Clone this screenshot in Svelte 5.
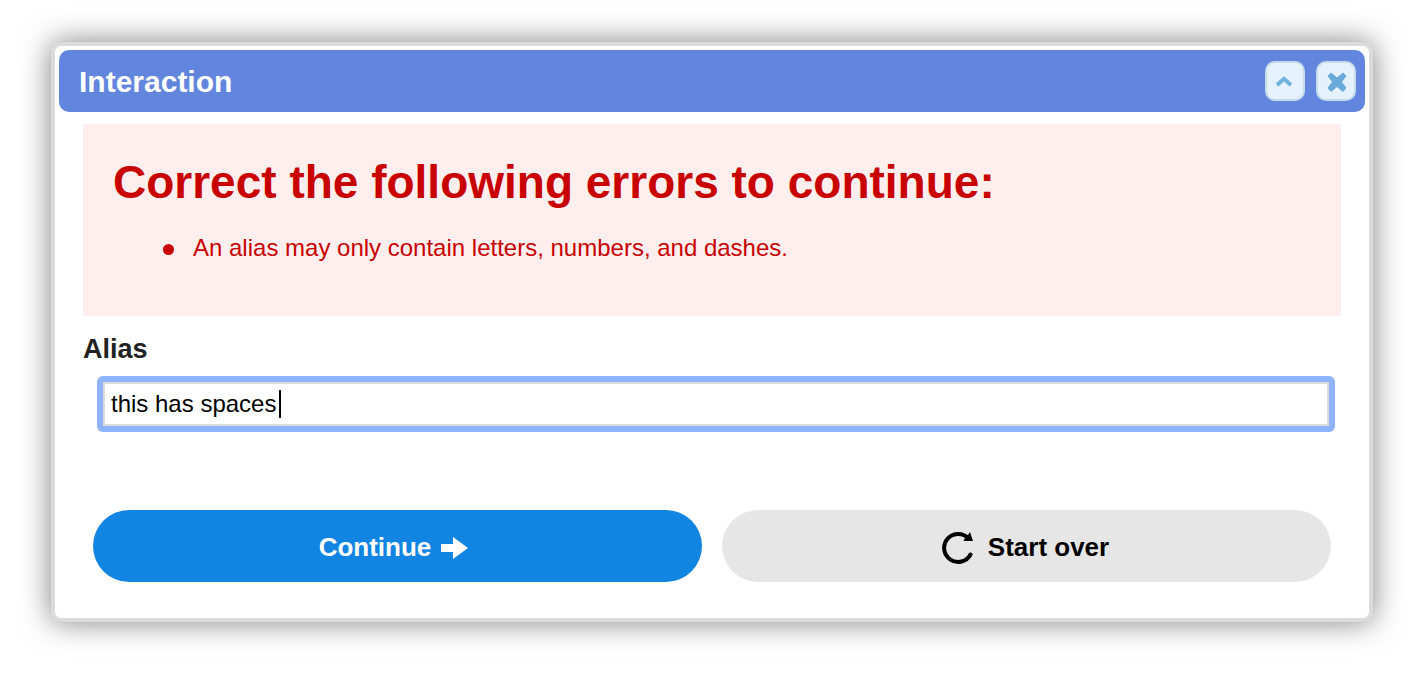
<script>
  let alias = $state('this has spaces');
  let collapsed = $state(false);
  let errors = ['An alias may only contain letters, numbers, and dashes.'];

  let input = $state();

  const context = document.createElement('canvas').getContext('2d');
  context.font = '24px "Liberation Sans", Helvetica, Arial, sans-serif';

  // the caret stands just after the typed text
  let caret = $derived(Math.ceil(context.measureText(alias).width) + 16);

  $effect(() => {
    input?.focus();
  });
</script>

<div class="dialog" role="dialog" aria-labelledby="dialog-title">
  <header class="titlebar">
    <span id="dialog-title" class="title">Interaction</span>
    <button
      type="button"
      class="tool"
      aria-label="Collapse"
      aria-expanded={!collapsed}
      onclick={() => (collapsed = !collapsed)}
    >
      <svg viewBox="0 0 36 36" width="36" height="36">
        <path d="M10 22 L17 15.8 L24 22" fill="none" stroke="#72b0dd" stroke-width="4" />
      </svg>
    </button>
    <button type="button" class="tool" aria-label="Close">
      <svg viewBox="0 0 36 36" width="36" height="36">
        <path
          d="M13 10 L19 15 L25 10 L28 13 L23.500 19 L28 25 L25 28.500 L19 23.500 L13 28.500 L10 25 L14.500 19 L10 13 Z"
          fill="#6aaadb"
          stroke="#6aaadb"
          stroke-linejoin="round"
        />
      </svg>
    </button>
  </header>

  {#if !collapsed}
    <form class="content">
      <div class="errors">
        <h1>Correct the following errors to continue:</h1>
        <ul>
          {#each errors as error}
            <li>{error}</li>
          {/each}
        </ul>
      </div>

      <label for="alias">Alias</label>
      <div class="field">
        <input id="alias" type="text" autocomplete="off" spellcheck="false" bind:value={alias} bind:this={input} />
        <span class="caret" style:left="{caret}px"></span>
      </div>

      <div class="actions">
        <button type="submit" class="primary">
          Continue
          <svg viewBox="0 0 28 24" width="28" height="24">
            <path d="M1 9 H13 V2 L28 13 L13 24 V17 H1 Z" fill="#fff" />
          </svg>
        </button>
        <button type="reset" class="secondary">
          <svg viewBox="0 0 34 34" width="34" height="34">
            <path d="M30.500 24.500 A14 14 0 1 1 28 8" fill="none" stroke="#000" stroke-width="4" stroke-linecap="round" />
            <path d="M30 2 L33 11 L23.500 11 L25 8 L28 5 Z" fill="#000" />
          </svg>
          Start over
        </button>
      </div>
    </form>
  {/if}
</div>

<style>
  :global(body) {
    margin: 0;
    background: #fff;
    font-family: "Liberation Sans", Helvetica, Arial, sans-serif;
    font-size: 24px;
  }

  .dialog {
    margin: 42px 53px 42px 51px;
    padding: 4px;
    border: 4px solid #dbdbdb;
    border-radius: 10px;
    background: #fff;
    box-shadow: 0 0 30px rgba(0, 0, 0, .5);
  }

  .titlebar {
    display: flex;
    align-items: center;
    gap: 11px;
    padding: 11px 9px 11px 20px;
    border-radius: 10px;
    background: #6285dd;
    color: #fff;
  }

  .title {
    flex: 1;
    padding-top: 2px;
    font-size: 30px;
    font-weight: bold;
    line-height: 38px;
  }

  .tool {
    box-sizing: border-box;
    display: grid;
    place-items: center;
    width: 40px;
    height: 40px;
    padding: 0;
    border: 2px solid #c5dbec;
    border-radius: 10px;
    background: #e6f1fe;
    cursor: pointer;
  }

  .content {
    padding: 12px 24px 32px;
  }

  .errors {
    padding: 30px 30px 52px;
    background: #feefee;
    color: #c80000;
  }

  h1 {
    margin: 0 0 22px;
    font-size: 46px;
    line-height: 56px;
  }

  ul {
    margin: 0;
    padding-left: 50px;
    line-height: 32px;
    list-style: none;
  }

  li {
    display: flex;
    gap: 19px;

    &::before {
      content: "";
      flex: none;
      width: 11px;
      height: 11px;
      margin-top: 12px;
      border-radius: 50%;
      background: currentColor;
    }
  }

  label {
    display: block;
    margin: 17px 0 11px;
    color: #222;
    font-size: 27px;
    font-weight: bold;
    line-height: 32px;
  }

  .field {
    position: relative;
    margin: 0 6px 0 14px;
    padding: 6px;
    border-radius: 6px;

    &:focus-within {
      background: #8fb3fd;
    }
  }

  input {
    box-sizing: border-box;
    display: block;
    width: 100%;
    padding: 6px;
    border: 2px solid #dbdbdb;
    border-radius: 0;
    outline: none;
    background: #fff;
    color: #000;
    caret-color: transparent;
    font: inherit;
    line-height: 28px;
  }

  .caret {
    position: absolute;
    top: 14px;
    width: 2px;
    height: 28px;
    background: #000;
    visibility: hidden;
  }

  .field:focus-within .caret {
    visibility: visible;
  }

  .actions {
    display: grid;
    grid-template-columns: 1fr 1fr;
    gap: 20px;
    margin: 78px 10px 0;

    & button {
      display: flex;
      align-items: center;
      justify-content: center;
      height: 72px;
      padding: 2px 8px 0 0;
      border: none;
      border-radius: 36px;
      font-family: inherit;
      font-size: 26px;
      font-weight: bold;
      cursor: pointer;
    }
  }

  .primary {
    gap: 9px;
    background: #1284e2;
    color: #fff;
  }

  .actions .secondary {
    gap: 14px;
    padding-right: 4px;
    background: #e6e6e6;
    color: #000;
  }
</style>
